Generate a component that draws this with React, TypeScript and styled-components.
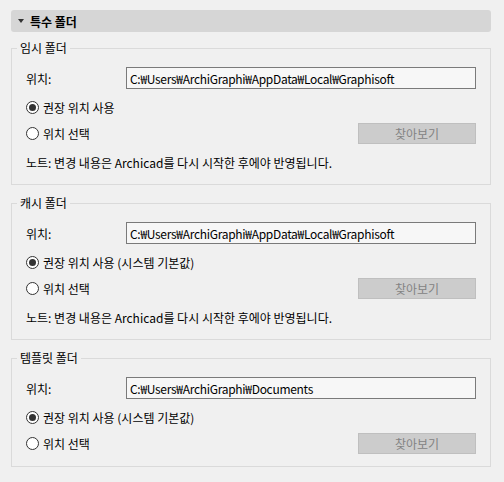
import React from 'react';
import styled, { createGlobalStyle } from 'styled-components';

const GlobalStyle = createGlobalStyle`
  html, body {
    margin: 0;
    background: #f0f0f0;
  }
  body {
    font-family: "Noto Sans CJK KR", "Noto Sans", sans-serif;
    font-size: 12px;
    color: #000;
  }
`;

interface FolderGroup {
  title: string;
  path: string;
  defaultLabel: string;
  note?: boolean;
}

const groups: FolderGroup[] = [
  {
    title: '임시 폴더',
    path: 'C:₩Users₩ArchiGraphi₩AppData₩Local₩Graphisoft',
    defaultLabel: '권장 위치 사용',
    note: true,
  },
  {
    title: '캐시 폴더',
    path: 'C:₩Users₩ArchiGraphi₩AppData₩Local₩Graphisoft',
    defaultLabel: '권장 위치 사용 (시스템 기본값)',
    note: true,
  },
  {
    title: '템플릿 폴더',
    path: 'C:₩Users₩ArchiGraphi₩Documents',
    defaultLabel: '권장 위치 사용 (시스템 기본값)',
  },
];

const NOTE = '노트: 변경 내용은 Archicad를 다시 시작한 후에야 반영됩니다.';

const Radio = ({ checked, label }: { checked?: boolean; label: string }) => (
  <RadioLabel>
    <RadioCircle checked={!!checked} />
    {label}
  </RadioLabel>
);

const App = () => {
  return (
    <Page>
      <GlobalStyle />
      <SectionHeader>
        <Caret />
        특수 폴더
      </SectionHeader>
      {groups.map((g) => (
        <Group key={g.title}>
          <Legend>{g.title}</Legend>
          <GroupBody>
            <LocationRow>
              <FieldLabel>위치:</FieldLabel>
              <PathBox>{g.path}</PathBox>
            </LocationRow>
            <OptionRow>
              <Radio checked label={g.defaultLabel} />
            </OptionRow>
            <ChooseRow>
              <Radio label="위치 선택" />
              <BrowseButton disabled>찾아보기</BrowseButton>
            </ChooseRow>
            {g.note && <Note>{NOTE}</Note>}
          </GroupBody>
        </Group>
      ))}
    </Page>
  );
};

const Page = styled.div`
  padding: 10px 13px 0 11px;
`;

const SectionHeader = styled.div`
  height: 22px;
  background: #d6d6d6;
  border-radius: 3px;
  display: flex;
  align-items: center;
  padding-left: 7px;
  gap: 6px;
  font-weight: bold;
  margin-bottom: 9px;
`;

const Caret = styled.span`
  width: 0;
  height: 0;
  border-left: 3.5px solid transparent;
  border-right: 3.5px solid transparent;
  border-top: 4px solid #333;
`;

const Group = styled.fieldset`
  margin: 0 0 11px;
  padding: 0;
  min-inline-size: auto;
  border: 1px solid #dadada;
`;

const Legend = styled.legend`
  margin-left: 5px;
  padding: 0 3px;
  line-height: 14px;
`;

const GroupBody = styled.div`
  padding: 12px 14px 12px;
  display: flex;
  flex-direction: column;
`;

const LocationRow = styled.div`
  display: flex;
  align-items: center;
  height: 22px;
`;

const FieldLabel = styled.span`
  width: 100px;
`;

const PathBox = styled.div`
  flex: 1;
  height: 22px;
  box-sizing: border-box;
  border: 1px solid #7a7a7a;
  background: #f7f7f7;
  padding: 0 3px;
  display: flex;
  align-items: center;
  white-space: nowrap;
  overflow: hidden;
  letter-spacing: -0.3px;
`;

const OptionRow = styled.div`
  display: flex;
  align-items: center;
  height: 20px;
  margin-top: 8px;
`;

const ChooseRow = styled.div`
  display: flex;
  align-items: center;
  justify-content: space-between;
  height: 21px;
  margin-top: 6px;
`;

const RadioLabel = styled.label`
  display: flex;
  align-items: center;
  gap: 4px;
`;

const RadioCircle = styled.span<{ checked: boolean }>`
  width: 13px;
  height: 13px;
  box-sizing: border-box;
  border-radius: 50%;
  border: 1px solid #333;
  background: #fff;
  display: flex;
  align-items: center;
  justify-content: center;

  &::after {
    content: '';
    width: 7px;
    height: 7px;
    border-radius: 50%;
    background: #333;
    display: ${(p) => (p.checked ? 'block' : 'none')};
  }
`;

const BrowseButton = styled.button`
  width: 118px;
  height: 21px;
  box-sizing: border-box;
  border: 1px solid #bfbfbf;
  background: #cccccc;
  color: #838383;
  font-family: inherit;
  font-size: 12px;
  padding: 0;
`;

const Note = styled.div`
  height: 20px;
  margin-top: 8px;
  display: flex;
  align-items: center;
`;

export default App;
